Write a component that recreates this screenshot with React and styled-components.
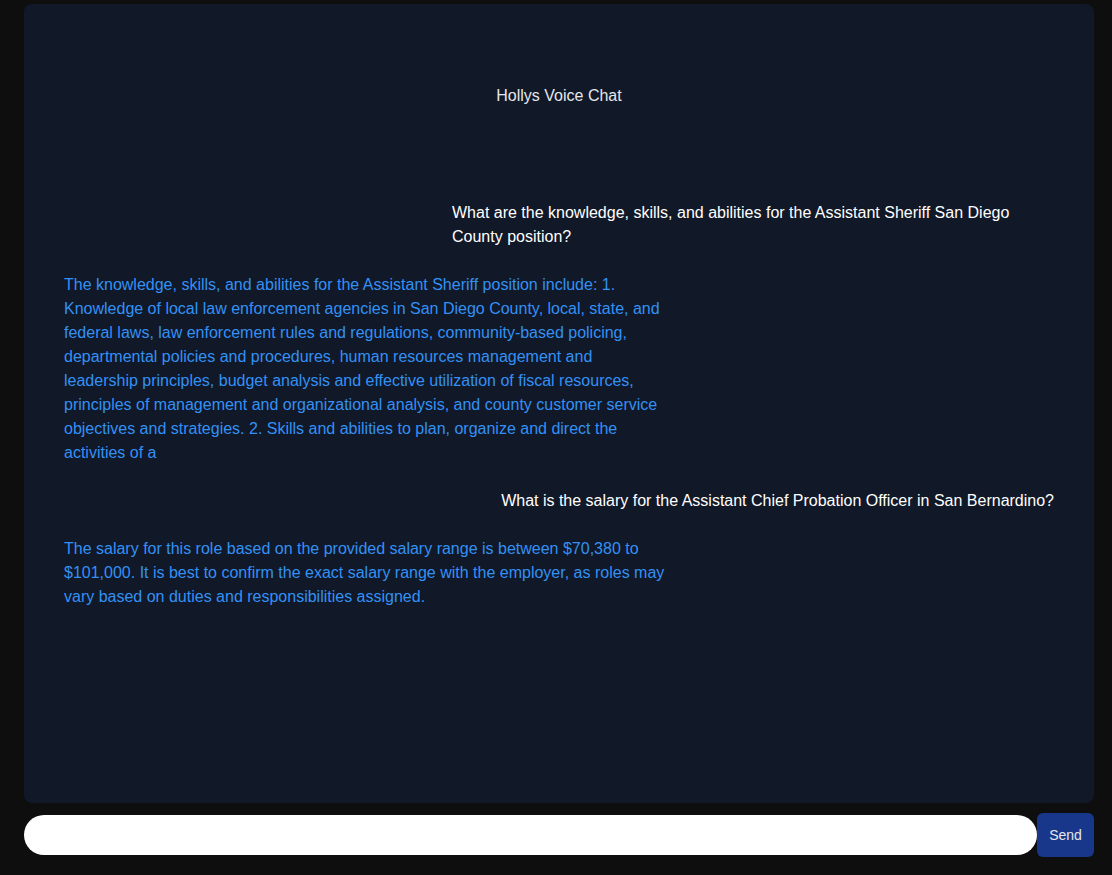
import React from "react";
import styled, { createGlobalStyle } from "styled-components";

const GlobalStyle = createGlobalStyle`
  html, body {
    margin: 0;
    padding: 0;
    background-color: #0e0e0e;
    font-family: "Liberation Sans", Arial, sans-serif;
  }
`;

const Page = styled.div`
  height: 875px;
  box-sizing: border-box;
  padding: 4px 18px 0 24px;
  display: flex;
  flex-direction: column;
`;

const ChatPanel = styled.div`
  height: 799px;
  box-sizing: border-box;
  background-color: #111827;
  border-radius: 8px;
  padding: 80px 40px 0 40px;
  display: flex;
  flex-direction: column;
`;

const Title = styled.h1`
  margin: 0 0 93px;
  text-align: center;
  font-size: 16px;
  line-height: 24px;
  font-weight: 400;
  color: #e5e7eb;
`;

const Messages = styled.div`
  display: flex;
  flex-direction: column;
  gap: 24px;
`;

const Bubble = styled.div`
  max-width: 602px;
  font-size: 16px;
  line-height: 24px;
  align-self: ${props => (props.$fromUser ? "flex-end" : "flex-start")};
  color: ${props => (props.$fromUser ? "#ffffff" : "#3391f5")};
`;

const InputRow = styled.form`
  margin-top: 10px;
  display: flex;
  align-items: center;
`;

const TextInput = styled.input`
  flex: 1;
  height: 40px;
  box-sizing: border-box;
  border: none;
  border-radius: 20px;
  background-color: #ffffff;
  padding: 0 16px;
  font-size: 16px;
  outline: none;
`;

const SendButton = styled.button`
  width: 57px;
  height: 44px;
  border: none;
  border-radius: 6px;
  background-color: #19378a;
  color: #e5e7eb;
  font-family: "Liberation Sans", Arial, sans-serif;
  font-size: 14px;
  cursor: pointer;
`;

const messages = [
  {
    fromUser: true,
    text: "What are the knowledge, skills, and abilities for the Assistant Sheriff San Diego County position?",
  },
  {
    fromUser: false,
    text: "The knowledge, skills, and abilities for the Assistant Sheriff position include: 1. Knowledge of local law enforcement agencies in San Diego County, local, state, and federal laws, law enforcement rules and regulations, community-based policing, departmental policies and procedures, human resources management and leadership principles, budget analysis and effective utilization of fiscal resources, principles of management and organizational analysis, and county customer service objectives and strategies. 2. Skills and abilities to plan, organize and direct the activities of a",
  },
  {
    fromUser: true,
    text: "What is the salary for the Assistant Chief Probation Officer in San Bernardino?",
  },
  {
    fromUser: false,
    text: "The salary for this role based on the provided salary range is between $70,380 to $101,000. It is best to confirm the exact salary range with the employer, as roles may vary based on duties and responsibilities assigned.",
  },
];

const App = () => {
  return (
    <>
      <GlobalStyle />
      <Page>
        <ChatPanel>
          <Title>Hollys Voice Chat</Title>
          <Messages>
            {messages.map((m, i) => (
              <Bubble key={i} $fromUser={m.fromUser}>
                {m.text}
              </Bubble>
            ))}
          </Messages>
        </ChatPanel>
        <InputRow onSubmit={e => e.preventDefault()}>
          <TextInput type="text" />
          <SendButton type="submit">Send</SendButton>
        </InputRow>
      </Page>
    </>
  );
};

export default App;
